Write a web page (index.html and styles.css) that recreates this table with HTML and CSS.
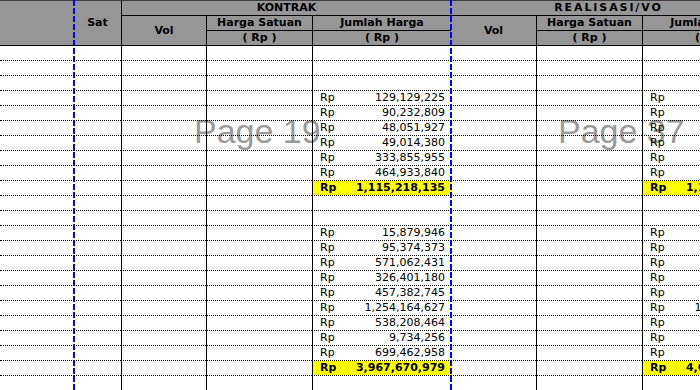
FILE: index.html
```html
<!DOCTYPE html>
<html>
<head>
<meta charset="utf-8">
<title>Sheet</title>
<link rel="stylesheet" href="styles.css">
</head>
<body>
<div class="sheet">
  <div class="watermark wm-1">Page 19</div>
  <div class="watermark wm-2">Page 37</div>

  <div class="grid">
    <div class="head">
      <div class="h blank"></div>
      <div class="h sat">Sat</div>
      <div class="h group kontrak bl">KONTRAK</div>
      <div class="h vol c3 bl">Vol</div>
      <div class="h sub c4 r2 bl">Harga Satuan</div>
      <div class="h sub c4 r3 bl">( Rp )</div>
      <div class="h sub c5 r2 bl">Jumlah Harga</div>
      <div class="h sub c5 r3 bl">( Rp )</div>
      <div class="h group realisasi">REALISASI/VO</div>
      <div class="h vol c6">Vol</div>
      <div class="h sub c7 r2 bl">Harga Satuan</div>
      <div class="h sub c7 r3 bl">( Rp )</div>
      <div class="h sub c8 r2 bl">Jumlah Harga</div>
      <div class="h sub c8 r3 bl">( Rp )</div>
    </div>

    <div class="row"><div class="c"></div><div class="c"></div><div class="c bl"></div><div class="c bl"></div><div class="c bl"></div><div class="c"></div><div class="c bl"></div><div class="c bl"></div></div>
    <div class="row"><div class="c"></div><div class="c"></div><div class="c bl"></div><div class="c bl"></div><div class="c bl"></div><div class="c"></div><div class="c bl"></div><div class="c bl"></div></div>
    <div class="row"><div class="c"></div><div class="c"></div><div class="c bl"></div><div class="c bl"></div><div class="c bl"></div><div class="c"></div><div class="c bl"></div><div class="c bl"></div></div>

    <div class="row"><div class="c"></div><div class="c"></div><div class="c bl"></div><div class="c bl"></div><div class="c bl amt"><span>Rp</span><span>129,129,225</span></div><div class="c"></div><div class="c bl"></div><div class="c bl amt"><span>Rp</span><span>129,129,225</span></div></div>
    <div class="row"><div class="c"></div><div class="c"></div><div class="c bl"></div><div class="c bl"></div><div class="c bl amt"><span>Rp</span><span>90,232,809</span></div><div class="c"></div><div class="c bl"></div><div class="c bl amt"><span>Rp</span><span>90,232,809</span></div></div>
    <div class="row"><div class="c"></div><div class="c"></div><div class="c bl"></div><div class="c bl"></div><div class="c bl amt"><span>Rp</span><span>48,051,927</span></div><div class="c"></div><div class="c bl"></div><div class="c bl amt"><span>Rp</span><span>48,051,927</span></div></div>
    <div class="row"><div class="c"></div><div class="c"></div><div class="c bl"></div><div class="c bl"></div><div class="c bl amt"><span>Rp</span><span>49,014,380</span></div><div class="c"></div><div class="c bl"></div><div class="c bl amt"><span>Rp</span><span>49,014,380</span></div></div>
    <div class="row"><div class="c"></div><div class="c"></div><div class="c bl"></div><div class="c bl"></div><div class="c bl amt"><span>Rp</span><span>333,855,955</span></div><div class="c"></div><div class="c bl"></div><div class="c bl amt"><span>Rp</span><span>333,855,955</span></div></div>
    <div class="row"><div class="c"></div><div class="c"></div><div class="c bl"></div><div class="c bl"></div><div class="c bl amt"><span>Rp</span><span>464,933,840</span></div><div class="c"></div><div class="c bl"></div><div class="c bl amt"><span>Rp</span><span>464,933,840</span></div></div>
    <div class="row"><div class="c"></div><div class="c"></div><div class="c bl"></div><div class="c bl"></div><div class="c bl amt total"><span>Rp</span><span>1,115,218,135</span></div><div class="c"></div><div class="c bl"></div><div class="c bl amt total"><span>Rp</span><span>1,132,456,780</span></div></div>

    <div class="row"><div class="c"></div><div class="c"></div><div class="c bl"></div><div class="c bl"></div><div class="c bl"></div><div class="c"></div><div class="c bl"></div><div class="c bl"></div></div>
    <div class="row"><div class="c"></div><div class="c"></div><div class="c bl"></div><div class="c bl"></div><div class="c bl"></div><div class="c"></div><div class="c bl"></div><div class="c bl"></div></div>

    <div class="row"><div class="c"></div><div class="c"></div><div class="c bl"></div><div class="c bl"></div><div class="c bl amt"><span>Rp</span><span>15,879,946</span></div><div class="c"></div><div class="c bl"></div><div class="c bl amt"><span>Rp</span><span>15,879,946</span></div></div>
    <div class="row"><div class="c"></div><div class="c"></div><div class="c bl"></div><div class="c bl"></div><div class="c bl amt"><span>Rp</span><span>95,374,373</span></div><div class="c"></div><div class="c bl"></div><div class="c bl amt"><span>Rp</span><span>95,374,373</span></div></div>
    <div class="row"><div class="c"></div><div class="c"></div><div class="c bl"></div><div class="c bl"></div><div class="c bl amt"><span>Rp</span><span>571,062,431</span></div><div class="c"></div><div class="c bl"></div><div class="c bl amt"><span>Rp</span><span>571,062,431</span></div></div>
    <div class="row"><div class="c"></div><div class="c"></div><div class="c bl"></div><div class="c bl"></div><div class="c bl amt"><span>Rp</span><span>326,401,180</span></div><div class="c"></div><div class="c bl"></div><div class="c bl amt"><span>Rp</span><span>326,401,180</span></div></div>
    <div class="row"><div class="c"></div><div class="c"></div><div class="c bl"></div><div class="c bl"></div><div class="c bl amt"><span>Rp</span><span>457,382,745</span></div><div class="c"></div><div class="c bl"></div><div class="c bl amt"><span>Rp</span><span>457,382,745</span></div></div>
    <div class="row"><div class="c"></div><div class="c"></div><div class="c bl"></div><div class="c bl"></div><div class="c bl amt"><span>Rp</span><span>1,254,164,627</span></div><div class="c"></div><div class="c bl"></div><div class="c bl amt"><span>Rp</span><span>1,268,164,627</span></div></div>
    <div class="row"><div class="c"></div><div class="c"></div><div class="c bl"></div><div class="c bl"></div><div class="c bl amt"><span>Rp</span><span>538,208,464</span></div><div class="c"></div><div class="c bl"></div><div class="c bl amt"><span>Rp</span><span>538,208,464</span></div></div>
    <div class="row"><div class="c"></div><div class="c"></div><div class="c bl"></div><div class="c bl"></div><div class="c bl amt"><span>Rp</span><span>9,734,256</span></div><div class="c"></div><div class="c bl"></div><div class="c bl amt"><span>Rp</span><span>9,734,256</span></div></div>
    <div class="row"><div class="c"></div><div class="c"></div><div class="c bl"></div><div class="c bl"></div><div class="c bl amt"><span>Rp</span><span>699,462,958</span></div><div class="c"></div><div class="c bl"></div><div class="c bl amt"><span>Rp</span><span>699,462,958</span></div></div>
    <div class="row"><div class="c"></div><div class="c"></div><div class="c bl"></div><div class="c bl"></div><div class="c bl amt total"><span>Rp</span><span>3,967,670,979</span></div><div class="c"></div><div class="c bl"></div><div class="c bl amt total"><span>Rp</span><span>4,612,345,678</span></div></div>

    <div class="row"><div class="c"></div><div class="c"></div><div class="c bl"></div><div class="c bl"></div><div class="c bl"></div><div class="c"></div><div class="c bl"></div><div class="c bl"></div></div>
  </div>

  <div class="pagebreak pb-1"></div>
  <div class="pagebreak pb-2"></div>
</div>
</body>
</html>
```

FILE: styles.css
```css
* {
  box-sizing: border-box;
}

html,
body {
  margin: 0;
  padding: 0;
  background: #ffffff;
  overflow: hidden;
  width: 700px;
  height: 390px;
}

.sheet {
  position: relative;
  width: 781px;
  height: 390px;
  font-family: "DejaVu Sans", sans-serif;
  font-size: 11px;
  color: #000;
}

.grid {
  position: relative;
}

.head {
  display: grid;
  grid-template-columns: 74px 47px 85px 106px 139px 85px 106px 139px;
  grid-template-rows: 15px 15px 15px;
  background: #969696;
  border-top: 1px solid #3c3c3c;
}

.h {
  font-weight: bold;
  line-height: 14px;
  border-bottom: 1px solid #000;
  display: flex;
  align-items: center;
  justify-content: center;
  white-space: nowrap;
}

.bl {
  border-left: 1px solid #000;
}

.blank {
  grid-column: 1;
  grid-row: 1 / 4;
}

.sat {
  grid-column: 2;
  grid-row: 1 / 4;
}

.kontrak {
  grid-column: 3 / 6;
  grid-row: 1;
}

.realisasi {
  grid-column: 6 / 9;
  grid-row: 1;
  padding-right: 15px;
  letter-spacing: 1.9px;
}

.vol {
  grid-row: 2 / 4;
}

.c3 { grid-column: 3; }
.c4 { grid-column: 4; }
.c5 { grid-column: 5; }
.c6 { grid-column: 6; }
.c7 { grid-column: 7; }
.c8 { grid-column: 8; }
.r2 { grid-row: 2; }
.r3 { grid-row: 3; }

.row {
  display: grid;
  grid-template-columns: 74px 47px 85px 106px 139px 85px 106px 139px;
  height: 15px;
}

.c {
  height: 15px;
  border-bottom: 1px dotted #000;
  line-height: 14px;
  white-space: nowrap;
}

.amt {
  display: flex;
  justify-content: space-between;
  padding: 0 6px 0 7px;
}

.total {
  background: #ffff00;
  background-clip: padding-box;
  font-weight: bold;
}

.watermark {
  position: absolute;
  top: 114px;
  font-family: "Liberation Sans", Arial, sans-serif;
  font-size: 34px;
  line-height: 34px;
  color: #9a9a9a;
  white-space: nowrap;
}

.wm-1 { left: 194px; }
.wm-2 { left: 558px; }

.pagebreak {
  position: absolute;
  top: 0;
  width: 2px;
  height: 390px;
  background: repeating-linear-gradient(to bottom, #0000ff 0 6px, transparent 6px 8px);
}

.pb-1 { left: 73px; }
.pb-2 { left: 450px; }
```
